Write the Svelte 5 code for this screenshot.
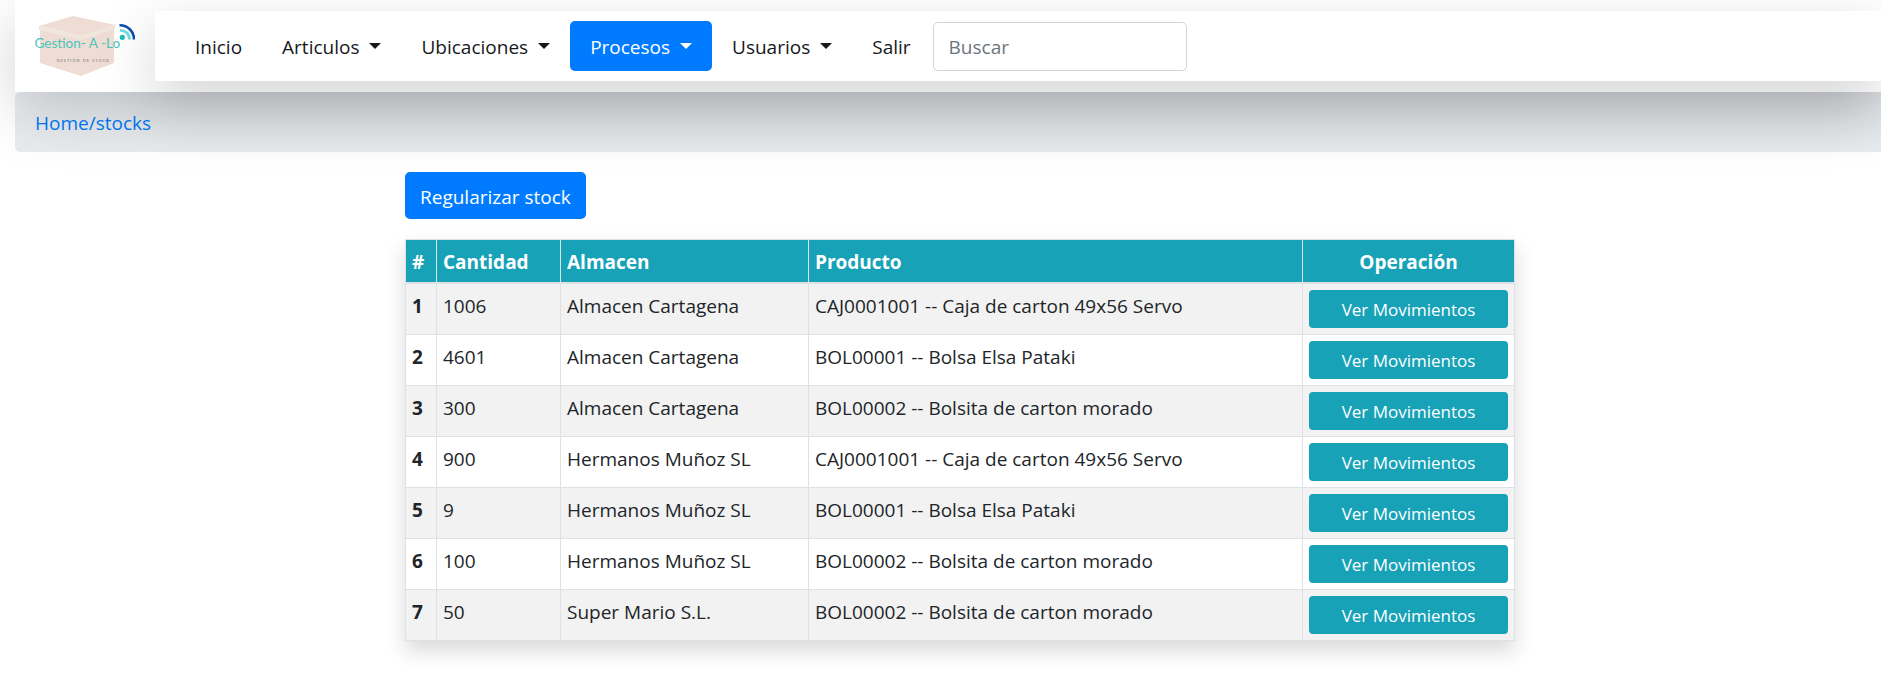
<script>
  const links = [
    { label: 'Inicio' },
    { label: 'Articulos', menu: true },
    { label: 'Ubicaciones', menu: true },
    { label: 'Procesos', menu: true, active: true },
    { label: 'Usuarios', menu: true },
    { label: 'Salir' }
  ];

  const caja = 'CAJ0001001 -- Caja de carton 49x56 Servo';
  const bolsa = 'BOL00001 -- Bolsa Elsa Pataki';
  const bolsita = 'BOL00002 -- Bolsita de carton morado';

  const stocks = [
    { cantidad: 1006, almacen: 'Almacen Cartagena', producto: caja },
    { cantidad: 4601, almacen: 'Almacen Cartagena', producto: bolsa },
    { cantidad: 300, almacen: 'Almacen Cartagena', producto: bolsita },
    { cantidad: 900, almacen: 'Hermanos Muñoz SL', producto: caja },
    { cantidad: 9, almacen: 'Hermanos Muñoz SL', producto: bolsa },
    { cantidad: 100, almacen: 'Hermanos Muñoz SL', producto: bolsita },
    { cantidad: 50, almacen: 'Super Mario S.L.', producto: bolsita }
  ];
</script>

<div class="page">
  <header class="topbar">
    <a class="brand" href="#inicio" aria-label="Gestion-A-Lo">
      <svg width="100" height="66" viewBox="35 13 100 66">
        <path d="M40 28 L81 39 L114 28 V63 L81 76 L40 63 Z" fill="#eedcd5" />
        <path d="M39 26 L73 16 L115 25 L81 36 Z" fill="#eedcd5" />
        <path d="M38.500 25.500 L81 35.500 L115.500 24 V28.500 L81 40 L39 30 Z" fill="#f0e7dc" />
        <text x="34.500" y="48" font-size="13.500" fill="#4cc4b8">Gestion- A -Lo</text>
        <text x="56.500" y="62" font-size="4" fill="#777" letter-spacing="1">GESTIÓN DE STOCK</text>
        <circle cx="122.300" cy="37.300" r="2.600" fill="#20b8bd" />
        <path d="M120 30.300 A9 9 0 0 1 129.500 39.500" fill="none" stroke="#6fdde0" stroke-width="2.800" />
        <path d="M119.500 25.300 A14 14 0 0 1 134 39.500" fill="none" stroke="#0c50b0" stroke-width="2.600" />
      </svg>
    </a>
    <nav class="menu">
      {#each links as link}
        <a class="link" class:active={link.active} href="#{link.label.toLowerCase()}">
          {link.label}{#if link.menu}<span class="caret"></span>{/if}
        </a>
      {/each}
      <input class="search" type="search" placeholder="Buscar" aria-label="Buscar" />
    </nav>
  </header>

  <div class="breadcrumb"><a href="#stocks">Home/stocks</a></div>

  <main class="content">
    <div class="column">
      <button class="primary" type="button">Regularizar stock</button>
      <table>
        <colgroup>
          <col class="c-num" /><col class="c-qty" /><col class="c-store" /><col class="c-prod" /><col class="c-op" />
        </colgroup>
        <thead>
          <tr>
            <th scope="col">#</th>
            <th scope="col">Cantidad</th>
            <th scope="col">Almacen</th>
            <th scope="col">Producto</th>
            <th scope="col" class="center">Operación</th>
          </tr>
        </thead>
        <tbody>
          {#each stocks as row, i}
            <tr>
              <th scope="row">{i + 1}</th>
              <td>{row.cantidad}</td>
              <td>{row.almacen}</td>
              <td>{row.producto}</td>
              <td class="action"><button class="info" type="button">Ver Movimientos</button></td>
            </tr>
          {/each}
        </tbody>
      </table>
    </div>
  </main>
</div>

<style>
  :global(body) {
    background: #fff;
  }
  .page {
    font-family: 'Open Sans', 'Noto Sans', sans-serif;
    font-size: 19px;
    line-height: 30px;
    color: #212529;
    padding-left: 15px;
    overflow-x: clip;
  }
  .page * {
    box-sizing: border-box;
  }
  a {
    text-decoration: none;
  }
  .topbar {
    position: relative;
    display: flex;
    align-items: center;
    padding: 11px 0 11px 20px;
    background: #fff;
    box-shadow: 0 20px 60px rgba(0, 0, 0, 0.175);
  }
  .brand {
    display: flex;
    margin-right: 20px;
  }
  .brand text {
    font-family: Lato, sans-serif;
  }
  .menu {
    flex: 1;
    display: flex;
    align-items: center;
    padding: 10px 20px;
    background: #fff;
    box-shadow: 0 20px 60px rgba(0, 0, 0, 0.175);
  }
  .link {
    display: flex;
    align-items: center;
    padding: 11px 20px 9px;
    border-radius: 5px;
    color: #16181b;
    white-space: nowrap;
  }
  .link.active {
    background: #007bff;
    color: #fff;
  }
  .caret {
    margin: 0 0 2px 10px;
    border: 6px solid transparent;
    border-top-color: currentColor;
    border-bottom: 0;
  }
  .search {
    width: 254px;
    height: 49px;
    margin-left: 2px;
    padding: 10px 15px 8px;
    border: 1px solid #ced4da;
    border-radius: 5px;
    background: #fff;
    font: inherit;
    color: #495057;
  }
  .search::placeholder {
    color: #6c757d;
    opacity: 1;
  }
  .breadcrumb {
    padding: 16px 20px 14px;
    background: #e9ecef;
    border-radius: 5px 0 0 5px;
  }
  .breadcrumb a {
    color: #007bff;
  }
  .content {
    display: grid;
    grid-template-columns: 390fr 1110fr 366fr;
    padding: 20px 0 32px;
  }
  .column {
    grid-column: 2;
  }
  button {
    display: block;
    border: 0;
    color: #fff;
    font: inherit;
    cursor: pointer;
  }
  .primary {
    margin-bottom: 20px;
    padding: 10px 15px 7px;
    border-radius: 5px;
    background: #007bff;
  }
  table {
    width: 100%;
    table-layout: fixed;
    border-collapse: collapse;
    box-shadow: 0 10px 20px rgba(0, 0, 0, 0.15);
  }
  .c-num {
    width: 31px;
  }
  .c-qty {
    width: 124px;
  }
  .c-store {
    width: 248px;
  }
  .c-op {
    width: 212px;
  }
  th,
  td {
    padding: 7px 6px 5px;
    border: 1px solid #dee2e6;
    text-align: left;
    vertical-align: top;
  }
  .action {
    padding: 6px;
  }
  thead th {
    border-bottom-width: 2px;
    background: #17a2b8;
    color: #fff;
  }
  th.center {
    text-align: center;
  }
  tbody tr {
    background: #fff;
  }
  tbody tr:nth-child(odd) {
    background: #f2f2f2;
  }
  .info {
    width: 100%;
    padding: 7px 10px 5px;
    border-radius: 4px;
    background: #17a2b8;
    font-size: 17px;
    line-height: 26px;
  }
</style>
